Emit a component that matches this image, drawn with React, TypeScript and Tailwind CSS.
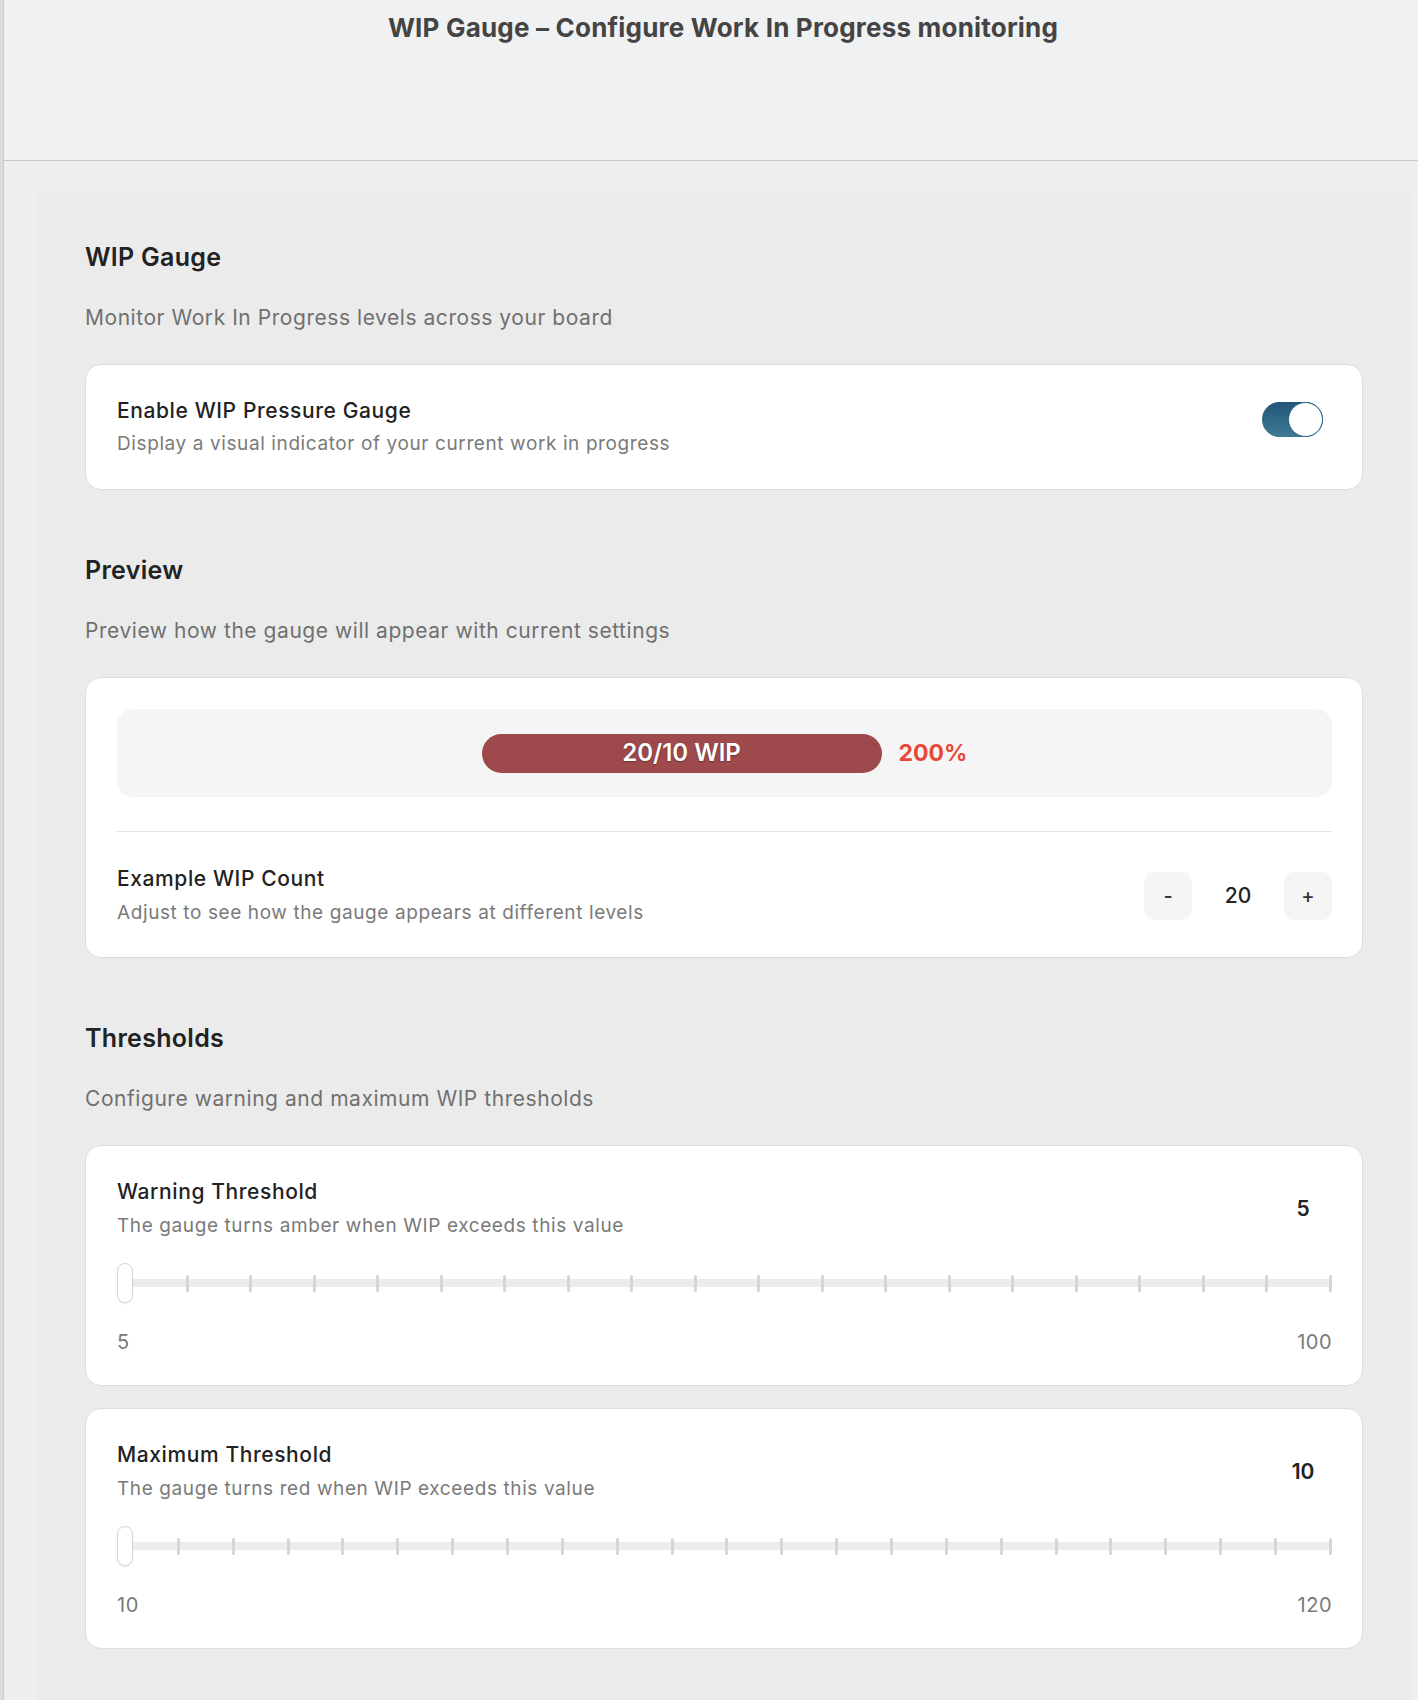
import React from 'react';

const Card: React.FC<{ children: React.ReactNode; className?: string }> = ({ children, className = '' }) => (
  <div className={`bg-white border border-[#dedede] rounded-[16px] pl-[31px] pr-[30px] ${className}`}>{children}</div>
);

const SectionHead: React.FC<{ title: string; desc: string }> = ({ title, desc }) => (
  <div className="mb-[32px]">
    <h2 className="text-[25px] leading-[28px] font-semibold text-[#222] tracking-[0.3px]">{title}</h2>
    <p className="mt-[33px] text-[21px] leading-[28px] text-[#707070] tracking-[0.55px]">{desc}</p>
  </div>
);

const Toggle: React.FC = () => (
  <div className="w-[61px] h-[35px] rounded-full bg-gradient-to-b from-[#225677] to-[#3f7a96] flex justify-end">
    <div className="w-[35px] h-[35px] rounded-full bg-white border-[1.5px] border-[#2a5f7f]" />
  </div>
);

interface SliderCardProps {
  title: string;
  desc: string;
  value: number;
  min: number;
  max: number;
  ticks: number;
}

const SliderCard: React.FC<SliderCardProps> = ({ title, desc, value, min, max, ticks }) => (
  <Card className="pt-[32px] pb-[30px]">
    <div className="flex items-center justify-between">
      <div>
        <div className="text-[21px] leading-[28px] font-medium text-[#222] tracking-[0.6px]">{title}</div>
        <div className="mt-[7px] text-[19px] leading-[26px] text-[#7a7a7a] tracking-[0.6px]">{desc}</div>
      </div>
      <div className="w-[58px] text-center text-[21px] font-semibold text-[#222]">{value}</div>
    </div>
    <div className="relative h-[40px] mt-[24px]">
      <div className="absolute left-0 right-0 top-[16px] h-[8px] rounded-full bg-[#ececec]" />
      <div className="absolute left-0 right-0 top-[12px] flex justify-between pl-[5px]">
        {Array.from({ length: ticks }).map((_, i) => (
          <div key={i} className="w-[3px] h-[17px] rounded-full bg-[#d6d6d6]" />
        ))}
      </div>
      <div className="absolute left-0 top-0 w-[16px] h-[40px] rounded-full bg-white border border-[#d6d6d6] shadow-[0_1px_2px_rgba(0,0,0,0.08)]" />
    </div>
    <div className="mt-[26px] flex justify-between text-[20px] leading-[26px] text-[#7a7a7a] tracking-[0.5px]">
      <span>{min}</span>
      <span>{max}</span>
    </div>
  </Card>
);

export default function App() {
  return (
    <div className="min-h-[1700px] flex bg-[#eeeff1] font-[Inter,'Noto_Sans',sans-serif]">
      <div className="w-[4px] bg-[#dcdcdc] border-r border-[#cecece] shrink-0" />
      <div className="flex-1">
        <header className="h-[161px] bg-[#f0f1f3] border-b border-[#c9c9c9] pt-[12px] pl-[24px] text-center">
          <h1 className="text-[26px] leading-[32px] font-bold text-[#444] tracking-[0.2px]">WIP Gauge – Configure Work In Progress monitoring</h1>
        </header>
        <div className="pt-[31px] pl-[32px] pr-[7px]">
          <main className="bg-[#ebebeb] pl-[49px] pr-[48px] pt-[51px] pb-[60px]">
            <SectionHead title="WIP Gauge" desc="Monitor Work In Progress levels across your board" />
            <Card className="pt-[32px] pb-[32px]">
              <div className="flex items-start justify-between">
                <div>
                  <div className="text-[21px] leading-[28px] font-medium text-[#222] tracking-[0.6px]">Enable WIP Pressure Gauge</div>
                  <div className="mt-[6px] text-[19px] leading-[26px] text-[#7a7a7a] tracking-[0.6px]">Display a visual indicator of your current work in progress</div>
                </div>
                <div className="mt-[5px] mr-[9px]">
                  <Toggle />
                </div>
              </div>
            </Card>

            <div className="mt-[66px]">
              <SectionHead title="Preview" desc="Preview how the gauge will appear with current settings" />
            </div>
            <Card className="pt-[31px] pb-[31px]">
              <div className="h-[88px] rounded-[16px] bg-[#f5f5f5] flex items-center justify-center gap-[17px]">
                <div className="w-[400px] h-[39px] rounded-full bg-[#9e4a4c] flex items-center justify-center text-white text-[24px] font-semibold [text-shadow:0_1px_2px_rgba(0,0,0,0.35)]">
                  20/10 WIP
                </div>
                <span className="text-[23px] font-bold text-[#e8473a]">200%</span>
              </div>
              <div className="mt-[34px] border-t border-[#e3e3e3]" />
              <div className="mt-[33px] flex items-center justify-between">
                <div>
                  <div className="text-[21px] leading-[28px] font-medium text-[#222] tracking-[0.6px]">Example WIP Count</div>
                  <div className="mt-[7px] text-[19px] leading-[26px] text-[#7a7a7a] tracking-[0.6px]">Adjust to see how the gauge appears at different levels</div>
                </div>
                <div className="flex items-center">
                  <button className="w-[48px] h-[48px] rounded-[10px] bg-[#f5f5f5] text-[20px] font-medium text-[#333]">-</button>
                  <span className="w-[92px] text-center text-[21px] font-medium text-[#222]">20</span>
                  <button className="w-[48px] h-[48px] rounded-[10px] bg-[#f5f5f5] text-[20px] font-medium text-[#333]">+</button>
                </div>
              </div>
            </Card>

            <div className="mt-[66px]">
              <SectionHead title="Thresholds" desc="Configure warning and maximum WIP thresholds" />
            </div>
            <div className="flex flex-col gap-[22px]">
              <SliderCard title="Warning Threshold" desc="The gauge turns amber when WIP exceeds this value" value={5} min={5} max={100} ticks={20} />
              <SliderCard title="Maximum Threshold" desc="The gauge turns red when WIP exceeds this value" value={10} min={10} max={120} ticks={23} />
            </div>
          </main>
        </div>
      </div>
    </div>
  );
}
